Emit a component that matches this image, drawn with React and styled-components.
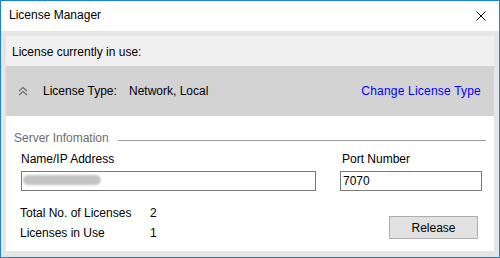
import React from 'react';
import styled, { createGlobalStyle } from 'styled-components';

const GlobalStyle = createGlobalStyle`
  html, body {
    margin: 0;
    padding: 0;
    background: #ffffff;
  }
  * {
    box-sizing: border-box;
  }
`;

const Window = styled.div`
  width: 500px;
  height: 258px;
  border: 1px solid #1883d7;
  display: flex;
  flex-direction: column;
  font-family: "Liberation Sans", Arial, sans-serif;
  font-size: 12px;
  color: #000;
  background: #e5e5e5;
`;

const TitleBar = styled.div`
  height: 30px;
  background: #fff;
  display: flex;
  align-items: center;
  justify-content: space-between;
  padding: 0 13px 0 8px;
  flex-shrink: 0;

  > span {
    font-size: 12px;
    padding-bottom: 2px;
  }
`;

const CloseIcon = styled.svg`
  width: 10px;
  height: 10px;
  margin-bottom: 1px;
`;

const Frame = styled.div`
  flex: 1;
  display: flex;
  flex-direction: column;
  padding: 5px 5px 6px 5px;
`;

const Header = styled.div`
  height: 30px;
  background: #f0f0f0;
  display: flex;
  align-items: center;
  padding: 1px 0 0 6px;
`;

const Band = styled.div`
  height: 50px;
  background: #d3d3d3;
  display: flex;
  align-items: center;
  padding: 0 13px 0 12px;
`;

const Chevron = styled.svg`
  width: 10px;
  height: 10px;
  margin-right: 15px;
`;

const TypeLabel = styled.span`
  width: 86px;
`;

const TypeValue = styled.span`
  flex: 1;
`;

const ChangeLink = styled.a`
  color: #0000ff;
  text-decoration: none;
  cursor: pointer;
  letter-spacing: 0.2px;
`;

const Main = styled.div`
  flex: 1;
  background: #fff;
  padding: 15px 8px 0 8px;
`;

const Legend = styled.div`
  display: flex;
  align-items: center;
  color: #6d6d6d;

  &::after {
    content: '';
    flex: 1;
    height: 1px;
    background: #a0a0a0;
    margin: 4px 0 0 9px;
  }
`;

const Fields = styled.div`
  display: grid;
  grid-template-columns: 295px 142px;
  column-gap: 24px;
  padding-left: 7px;
  margin-top: 7px;
`;

const Field = styled.label`
  display: flex;
  flex-direction: column;
  gap: 5px;
`;

const FieldLabel = styled.span`
  padding-left: ${p => p.$indent || 0}px;
`;

const InputWrap = styled.div`
  position: relative;
  height: 20px;
`;

const Input = styled.input`
  width: 100%;
  height: 20px;
  border: 1px solid #7a7a7a;
  padding: 0 2px;
  font-family: "Liberation Sans", Arial, sans-serif;
  font-size: 12px;
  color: #000;
  outline: none;
  background: #fff;
`;

const Blur = styled.span`
  position: absolute;
  left: 2px;
  top: 4px;
  width: 78px;
  height: 10px;
  border-radius: 5px;
  background: #c4c4c4;
  filter: blur(1.2px);
`;

const Bottom = styled.div`
  display: flex;
  justify-content: space-between;
  align-items: flex-start;
  padding: 15px 8px 0 6px;
`;

const Stats = styled.div`
  display: grid;
  grid-template-columns: 130px auto;
  row-gap: 6px;
`;

const Button = styled.button`
  width: 89px;
  height: 23px;
  margin-top: 10px;
  background: #e1e1e1;
  border: 1px solid #adadad;
  font-family: "Liberation Sans", Arial, sans-serif;
  font-size: 12px;
  color: #000;
  padding: 0;
`;

export default function App() {
  return (
    <>
      <GlobalStyle />
      <Window>
        <TitleBar>
          <span>License Manager</span>
          <CloseIcon viewBox="0 0 10 10">
            <path d="M0.5 0.5 L9.5 9.5 M9.5 0.5 L0.5 9.5" stroke="#000" strokeWidth="1" />
          </CloseIcon>
        </TitleBar>
        <Frame>
          <Header>License currently in use:</Header>
          <Band>
            <Chevron viewBox="0 0 10 10">
              <path d="M1 5 L5 1.5 L9 5 M1 9 L5 5.5 L9 9" fill="none" stroke="#6a6a6a" strokeWidth="1.1" />
            </Chevron>
            <TypeLabel>License Type:</TypeLabel>
            <TypeValue>Network, Local</TypeValue>
            <ChangeLink>Change License Type</ChangeLink>
          </Band>
          <Main>
            <Legend>Server Infomation</Legend>
            <Fields>
              <Field>
                <FieldLabel>Name/IP Address</FieldLabel>
                <InputWrap>
                  <Input defaultValue="" />
                  <Blur />
                </InputWrap>
              </Field>
              <Field>
                <FieldLabel $indent={2}>Port Number</FieldLabel>
                <InputWrap>
                  <Input defaultValue="7070" />
                </InputWrap>
              </Field>
            </Fields>
            <Bottom>
              <Stats>
                <span>Total No. of Licenses</span>
                <span>2</span>
                <span>Licenses in Use</span>
                <span>1</span>
              </Stats>
              <Button>Release</Button>
            </Bottom>
          </Main>
        </Frame>
      </Window>
    </>
  );
}
